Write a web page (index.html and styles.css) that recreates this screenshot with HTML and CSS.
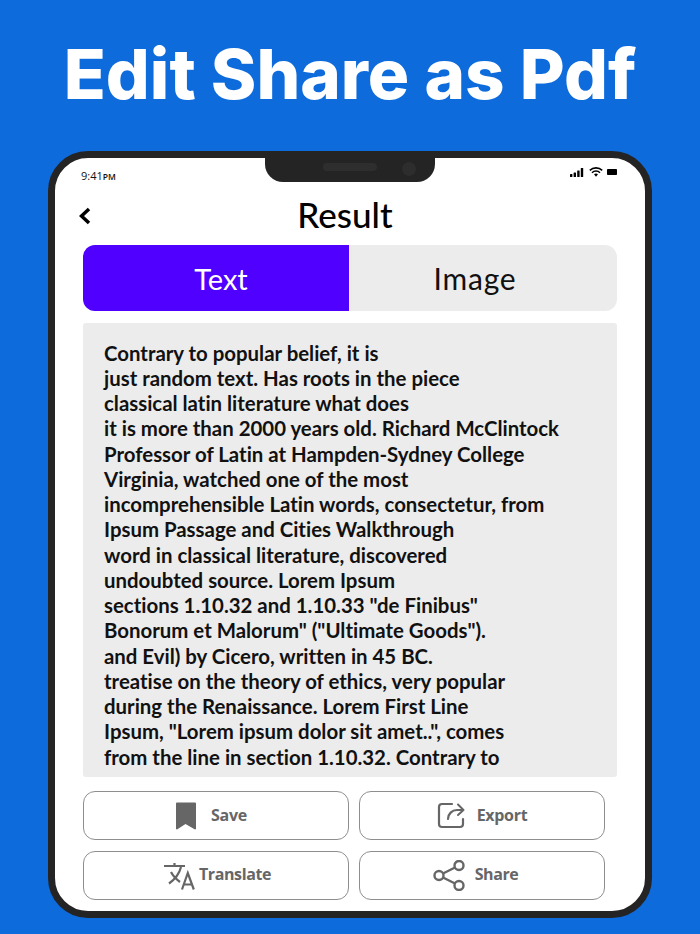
FILE: index.html
```html
<!DOCTYPE html>
<html lang="en">
<head>
<meta charset="utf-8">
<title>Edit Share as Pdf</title>
<link rel="stylesheet" href="styles.css">
</head>
<body>
<h1 class="headline">Edit Share as Pdf</h1>
<div class="phone">
  <div class="notch"><span class="speaker"></span><span class="camera"></span></div>
  <div class="status">
    <span class="time">9:41<small>PM</small></span>
    <span class="status-icons">
      <svg width="15" height="9" viewBox="0 0 15 9"><rect x="0" y="6" width="2.4" height="3" rx=".5"/><rect x="3.6" y="4.5" width="2.4" height="4.5" rx=".5"/><rect x="7.2" y="2.5" width="2.4" height="6.5" rx=".5"/><rect x="10.8" y="0" width="2.4" height="9" rx=".5"/></svg>
      <svg width="14" height="10" viewBox="0 0 14 10" class="wifi"><path d="M.8 3.400a9 9 0 0 1 12.400 0M3 5.700a5.700 5.700 0 0 1 8 0" fill="none" stroke="#000" stroke-width="1.600"/><path d="M5 7.300a3 3 0 0 1 4 0L7 9.800z"/></svg>
      <svg width="10" height="6" viewBox="0 0 10 6" class="battery"><rect width="10" height="6" rx=".8"/></svg>
    </span>
  </div>
  <header class="topbar">
    <svg class="back" width="12" height="18" viewBox="0 0 12 18"><path d="M10 2 2.500 9l7.500 7" fill="none" stroke="#000" stroke-width="3.500"/></svg>
    <h2 class="title">Result</h2>
  </header>
  <div class="tabs">
    <div class="tab active">Text</div>
    <div class="tab second">Image</div>
  </div>
  <div class="panel">
    <div class="line">Contrary to popular belief, it is</div>
    <div class="line">just random text. Has roots in the piece</div>
    <div class="line">classical latin literature what does</div>
    <div class="line">it is more than 2000 years old. Richard McClintock</div>
    <div class="line">Professor of Latin at Hampden-Sydney College</div>
    <div class="line">Virginia, watched one of the most</div>
    <div class="line">incomprehensible Latin words, consectetur, from</div>
    <div class="line">Ipsum Passage and Cities Walkthrough</div>
    <div class="line">word in classical literature, discovered</div>
    <div class="line">undoubted source. Lorem Ipsum</div>
    <div class="line">sections 1.10.32 and 1.10.33 "de Finibus"</div>
    <div class="line">Bonorum et Malorum" ("Ultimate Goods").</div>
    <div class="line">and Evil) by Cicero, written in 45 BC.</div>
    <div class="line">treatise on the theory of ethics, very popular</div>
    <div class="line">during the Renaissance. Lorem First Line</div>
    <div class="line">Ipsum, "Lorem ipsum dolor sit amet..", comes</div>
    <div class="line">from the line in section 1.10.32. Contrary to</div>
  </div>
  <div class="actions">
    <div class="btn save">
      <svg width="22" height="28" viewBox="0 0 22 28"><path d="M1 1.500a1 1 0 0 1 1-1h18a1 1 0 0 1 1 1V27l-1 .5-9.500-5.500L2 27.500 1 27z" fill="#666"/></svg>
      <span>Save</span>
    </div>
    <div class="btn export">
      <svg width="28" height="27" viewBox="0 0 28 27" fill="none" stroke="#666" stroke-width="2.200" stroke-linecap="round" stroke-linejoin="round"><path d="M15 2H5a3 3 0 0 0-3 3v17a3 3 0 0 0 3 3h18a3 3 0 0 0 3-3v-5"/><path d="M11 17c0-5 4-9 9-9h6"/><path d="M21 2.500 26.500 8 21 13" stroke-width="2"/></svg>
      <span>Export</span>
    </div>
    <div class="btn translate">
      <svg width="31" height="28" viewBox="0 0 31 28" fill="none" stroke="#666" stroke-width="2.200"><path d="M0 4h21M10.500 1v3M17 5C15 13 10 18 5 21.500M7 10c2 4 5 7 9 10M18 27.500 23.800 11l6 16.500M19.800 22.500h8"/></svg>
      <span>Translate</span>
    </div>
    <div class="btn share">
      <svg width="32" height="31" viewBox="0 0 32 31" fill="none" stroke="#666" stroke-width="2.400"><circle cx="6" cy="15.500" r="4.500"/><circle cx="26" cy="5.500" r="4.500"/><circle cx="26" cy="25.500" r="4.500"/><path d="M10 13.500 22 7.500M10 17.500l12 6"/></svg>
      <span>Share</span>
    </div>
  </div>
</div>
</body>
</html>
```
FILE: styles.css
```css
* { box-sizing: border-box; }
html, body { margin: 0; height: 934px; overflow: hidden; }
body {
  background: #0d6bdb;
  font-family: "Lato", "Noto Sans", sans-serif;
  font-variant-ligatures: none;
  padding-top: 26px;
}
.headline {
  margin: 0;
  height: 96px;
  line-height: 96px;
  text-align: center;
  font-family: "Inter", sans-serif;
  font-weight: 800;
  font-size: 69px;
  color: #fff;
  white-space: nowrap;
}
.phone {
  position: relative;
  margin: 29px 48px 0;
  width: 604px;
  height: 767px;
  background: #fff;
  border: 7px solid #242424;
  border-radius: 40px;
  padding: 0 28px;
}
.notch {
  position: absolute;
  top: -1px;
  left: 210px;
  width: 170px;
  height: 25px;
  background: #242424;
  border-radius: 0 0 18px 18px;
  display: flex;
  align-items: flex-start;
  padding: 5px 0 0 58px;
  gap: 25px;
}
.speaker { width: 54px; height: 8px; margin-top: 1px; border-radius: 4px; background: #2e2e2e; }
.camera { width: 14px; height: 14px; border-radius: 50%; background: #2d2d2d; }
.status {
  height: 35px;
  display: flex;
  justify-content: space-between;
  align-items: flex-start;
  margin: 0 -2px;
  padding-top: 11px;
}
.time { font-size: 11px; line-height: 13px; color: #111; font-family: "Open Sans", sans-serif; }
.time small { font-size: 8.500px; font-weight: 600; }
.status-icons { display: flex; align-items: center; gap: 4px; margin-right: 2px; margin-top: -2px; }
.topbar {
  position: relative;
  height: 52px;
  display: flex;
  align-items: flex-start;
  justify-content: center;
}
.back { position: absolute; left: -4px; top: 14px; }
.title {
  margin: -2px 0 0;
  font-weight: 500;
  font-size: 35px;
  line-height: 46px;
  color: #000;
  position: relative;
  left: -5px;
}
.tabs {
  display: flex;
  height: 66px;
  border-radius: 12px;
  overflow: hidden;
  background: #ececec;
}
.tab {
  flex: 1;
  display: flex;
  align-items: center;
  justify-content: center;
  font-size: 30px;
  color: #111;
}
.tab.active { flex: 0 0 266px; background: #5000ff; color: #fff; padding-left: 10px; font-size: 29px; }
.tab.second { padding-right: 16px; letter-spacing: 0.8px; }
.panel {
  margin-top: 12px;
  height: 454px;
  background: #ececec;
  border-radius: 3px;
  padding: 17.500px 10px 0 21px;
  overflow: hidden;
}
.line {
  font-size: 20.400px;
  line-height: 25.250px;
  font-weight: 700;
  color: #111;
  white-space: nowrap;
}
.actions {
  margin-top: 14px;
  display: grid;
  grid-template-columns: 266px 246px;
  grid-auto-rows: 49px;
  column-gap: 10px;
  row-gap: 11px;
}
.btn {
  display: flex;
  align-items: center;
  justify-content: center;
  border: 1px solid #8e8e8e;
  border-radius: 12px;
  font-family: "Open Sans", sans-serif;
  font-weight: 700;
  font-size: 16px;
  letter-spacing: -0.3px;
  color: #666;
}
.btn span { position: relative; top: -1px; }
.translate span { top: -2px; letter-spacing: -0.4px; }
.share span { top: -2px; letter-spacing: -0.4px; }
.save { gap: 14px; padding-right: 10px; }
.export { gap: 12px; }
.translate { gap: 4px; padding-left: 3px; }
.share { gap: 10px; padding-right: 13px; }
```
